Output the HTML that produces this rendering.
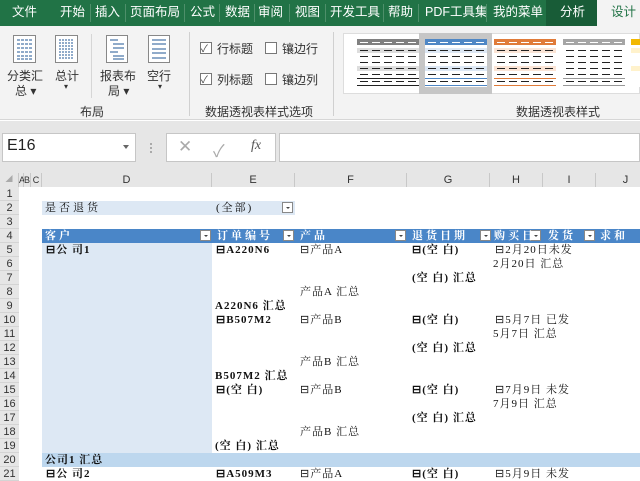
<!DOCTYPE html>
<html><head><meta charset="utf-8"><style>
*{margin:0;padding:0;box-sizing:border-box}
body{width:640px;height:480px;overflow:hidden;position:relative;background:#fff;font-family:"Liberation Sans","Microsoft YaHei","Noto Sans CJK SC",sans-serif}
.a{position:absolute}
.tab{position:absolute;top:0;height:26px;line-height:24px;color:#fff;font-size:12.5px;white-space:nowrap}
.sep{position:absolute;top:4px;width:1px;height:18px;background:#4e8f6a}
.rl{position:absolute;font-size:12px;color:#333;white-space:nowrap}
.cb{position:absolute;width:12px;height:12px;border:1px solid #777;background:#fff}
.thumb{position:absolute;top:39px;width:62px;height:48px;background:#fff}
.dl{position:absolute;left:3px;right:3px;height:1px;background:repeating-linear-gradient(90deg,#222 0 8px,transparent 8px 12px)}
.g{font-family:"Liberation Serif","Noto Serif CJK SC",serif;font-size:11px;color:#111;position:absolute;white-space:nowrap;line-height:14px;letter-spacing:1px}
.b{font-weight:bold}
.rh{position:absolute;left:0;width:19px;height:14px;font-size:11px;color:#333;text-align:center;line-height:14px;border-bottom:1px solid #d4d4d4;background:#e6e6e6}
.ch{position:absolute;top:173px;height:14px;font-size:11px;color:#333;text-align:center;line-height:14px;border-right:1px solid #c8c8c8;background:#e6e6e6}
.dd{position:absolute;width:11px;height:11px;background:#fff;border:1px solid #888}
.dd:after{content:"";position:absolute;left:3px;top:4px;border:2px solid transparent;border-top:2px solid #444}
.hw{color:#fff;font-family:"Liberation Serif","Noto Serif CJK SC",serif;font-size:11px;position:absolute;top:229px;line-height:14px;font-weight:bold;letter-spacing:3px}
</style></head><body>
<div class="a" style="left:0;top:0;width:640px;height:26px;background:#217346"></div>
<div class="a" style="left:546px;top:0;width:51px;height:26px;background:#185c37"></div>
<div class="a" style="left:597px;top:0;width:43px;height:27px;background:#f3f3f3"></div>
<div class="tab" style="left:12px">文件</div>
<div class="tab" style="left:60px">开始</div><div class="sep" style="left:90px"></div>
<div class="tab" style="left:95px">插入</div><div class="sep" style="left:125px"></div>
<div class="tab" style="left:130px">页面布局</div><div class="sep" style="left:184px"></div>
<div class="tab" style="left:190px">公式</div><div class="sep" style="left:219px"></div>
<div class="tab" style="left:225px">数据</div><div class="sep" style="left:254px"></div>
<div class="tab" style="left:258px">审阅</div><div class="sep" style="left:289px"></div>
<div class="tab" style="left:295px">视图</div><div class="sep" style="left:325px"></div>
<div class="tab" style="left:330px">开发工具</div><div class="sep" style="left:383px"></div>
<div class="tab" style="left:388px">帮助</div><div class="sep" style="left:418px"></div>
<div class="tab" style="left:425px">PDF工具集</div><div class="sep" style="left:486px"></div>
<div class="tab" style="left:493px">我的菜单</div>
<div class="tab" style="left:560px">分析</div>
<div class="tab" style="left:611px;color:#217346">设计</div>
<div class="a" style="left:0;top:26px;width:640px;height:94px;background:#f3f3f3;border-bottom:1px solid #d6d6d6"></div>
<svg class="a" style="left:12px;top:34px" width="170" height="30">
 <g fill="#fff" stroke="#888"><rect x="1.5" y="1.5" width="22" height="27"/><rect x="43.5" y="1.5" width="22" height="27"/><rect x="94.5" y="1.5" width="21" height="27"/><rect x="136.5" y="1.5" width="21" height="27"/></g>
 <g stroke="#6b8fb8" stroke-width="1.5">
  <path d="M5 6h15M5 10h15M5 14h15M5 18h15M5 22h15M5 25h15" stroke-dasharray="3 1"/>
  <path d="M47 6h15M47 9h15M47 12h15M47 15h15M47 18h15M47 21h15M47 24h15" stroke-dasharray="2 1"/>
  <path d="M98 6h8M101 10h11M101 14h11M98 18h8M101 22h11M101 25h11"/>
  <path d="M140 6h14M140 10h14M140 15h14M140 19h14M140 24h14"/>
 </g></svg>
<div class="rl" style="left:7px;top:67px">分类汇</div><div class="rl" style="left:15px;top:82px">总 ▾</div>
<div class="rl" style="left:55px;top:67px">总计</div><div class="rl" style="left:64px;top:82px;font-size:8px">▾</div>
<div class="a" style="left:91px;top:34px;width:1px;height:64px;background:#d6d6d6"></div>
<div class="rl" style="left:100px;top:67px">报表布</div><div class="rl" style="left:108px;top:82px">局 ▾</div>
<div class="rl" style="left:147px;top:67px">空行</div><div class="rl" style="left:158px;top:82px;font-size:8px">▾</div>
<div class="rl" style="left:80px;top:103px">布局</div>
<div class="a" style="left:189px;top:32px;width:1px;height:84px;background:#d0d0d0"></div>
<div class="cb" style="left:200px;top:42px"></div><div class="rl" style="left:201px;top:40px;font-size:10px;color:#444">✓</div>
<div class="rl" style="left:217px;top:40px">行标题</div>
<div class="cb" style="left:265px;top:42px"></div><div class="rl" style="left:282px;top:40px">镶边行</div>
<div class="cb" style="left:200px;top:73px"></div><div class="rl" style="left:201px;top:71px;font-size:10px;color:#444">✓</div>
<div class="rl" style="left:217px;top:71px">列标题</div>
<div class="cb" style="left:265px;top:73px"></div><div class="rl" style="left:282px;top:71px">镶边列</div>
<div class="rl" style="left:205px;top:103px">数据透视表样式选项</div>
<div class="a" style="left:333px;top:32px;width:1px;height:84px;background:#d0d0d0"></div>
<div class="a" style="left:343px;top:33px;width:297px;height:61px;background:#fff;border:1px solid #ddd"></div>
<div class="a" style="left:419px;top:33px;width:73px;height:61px;background:#c6c6c6"></div>
<div class="thumb" style="left:357px"><div class="a" style="left:0;top:0;width:62px;height:6px;background:#808080"></div><div class="a" style="left:0;top:9px;width:62px;height:5px;background:#ddd"></div><div class="a" style="left:0;top:27px;width:62px;height:5px;background:#ddd"></div>
<div class="dl" style="top:3px;background:repeating-linear-gradient(90deg,#fff 0 8px,transparent 8px 12px)"></div><div class="dl" style="top:11px"></div><div class="dl" style="top:17px"></div><div class="dl" style="top:23px"></div><div class="dl" style="top:29px"></div><div class="dl" style="top:35px"></div><div class="dl" style="top:42px"></div><div class="a" style="left:0;top:39px;width:62px;height:1px;background:#222"></div><div class="a" style="left:0;top:46px;width:62px;height:1px;background:#222"></div></div>
<div class="thumb" style="left:425px"><div class="a" style="left:0;top:0;width:62px;height:6px;background:#4f87c5"></div><div class="a" style="left:0;top:9px;width:62px;height:5px;background:#dde8f5"></div><div class="a" style="left:0;top:27px;width:62px;height:5px;background:#dde8f5"></div>
<div class="dl" style="top:3px;background:repeating-linear-gradient(90deg,#fff 0 8px,transparent 8px 12px)"></div><div class="dl" style="top:11px"></div><div class="dl" style="top:17px"></div><div class="dl" style="top:23px"></div><div class="dl" style="top:29px"></div><div class="dl" style="top:35px"></div><div class="dl" style="top:42px"></div><div class="a" style="left:0;top:39px;width:62px;height:1px;background:#4f87c5"></div><div class="a" style="left:0;top:46px;width:62px;height:1px;background:#4f87c5"></div></div>
<div class="thumb" style="left:494px"><div class="a" style="left:0;top:0;width:62px;height:6px;background:#e07b39"></div><div class="a" style="left:0;top:9px;width:62px;height:5px;background:#fbe4d5"></div><div class="a" style="left:0;top:27px;width:62px;height:5px;background:#fbe4d5"></div>
<div class="dl" style="top:3px;background:repeating-linear-gradient(90deg,#fff 0 8px,transparent 8px 12px)"></div><div class="dl" style="top:11px"></div><div class="dl" style="top:17px"></div><div class="dl" style="top:23px"></div><div class="dl" style="top:29px"></div><div class="dl" style="top:35px"></div><div class="dl" style="top:42px"></div><div class="a" style="left:0;top:39px;width:62px;height:1px;background:#e07b39"></div><div class="a" style="left:0;top:46px;width:62px;height:1px;background:#e07b39"></div></div>
<div class="thumb" style="left:563px"><div class="a" style="left:0;top:0;width:62px;height:6px;background:#a5a5a5"></div>
<div class="dl" style="top:3px;background:repeating-linear-gradient(90deg,#fff 0 8px,transparent 8px 12px)"></div><div class="dl" style="top:11px"></div><div class="dl" style="top:17px"></div><div class="dl" style="top:23px"></div><div class="dl" style="top:29px"></div><div class="dl" style="top:35px"></div><div class="dl" style="top:42px"></div><div class="a" style="left:0;top:39px;width:62px;height:1px;background:#999"></div><div class="a" style="left:0;top:46px;width:62px;height:1px;background:#999"></div></div>
<div class="thumb" style="left:631px;width:9px"><div class="a" style="left:0;top:0;width:9px;height:6px;background:#f2b800"></div><div class="a" style="left:0;top:9px;width:9px;height:5px;background:#fff2cc"></div><div class="a" style="left:0;top:27px;width:9px;height:5px;background:#fff2cc"></div></div>
<div class="rl" style="left:516px;top:103px">数据透视表样式</div>
<div class="a" style="left:0;top:121px;width:640px;height:52px;background:#e6e6e6"></div>
<div class="a" style="left:2px;top:133px;width:134px;height:29px;background:#fff;border:1px solid #c6c6c6"></div>
<div class="a" style="left:7px;top:137px;font-size:16px;color:#222">E16</div>
<div class="a" style="left:123px;top:145px;border:3.5px solid transparent;border-top:4px solid #666"></div>
<div class="a" style="left:150px;top:143px;width:2px;height:10px;border-left:2px dotted #aaa"></div>
<div class="a" style="left:166px;top:133px;width:110px;height:29px;background:#fff;border:1px solid #c6c6c6"></div>
<div class="a" style="left:178px;top:137px;font-size:17px;color:#aaa">✕</div>
<div class="a" style="left:213px;top:137px;font-size:17px;color:#aaa">✓</div>
<div class="a" style="left:251px;top:138px;font-size:14px;color:#555;font-style:italic;font-family:'Liberation Serif',serif">fx</div>
<div class="a" style="left:279px;top:133px;width:361px;height:29px;background:#fff;border:1px solid #c6c6c6"></div>
<div class="a" style="left:0;top:173px;width:640px;height:14px;background:#e6e6e6;border-bottom:1px solid #bbb"></div>
<div class="ch" style="left:0;width:19px;font-size:7px;color:#aaa">◢</div>
<div class="ch" style="left:19px;width:5px;font-size:9px">A</div>
<div class="ch" style="left:24px;width:7px;font-size:9px">B</div>
<div class="ch" style="left:31px;width:11px;font-size:9px">C</div>
<div class="ch" style="left:42px;width:170px">D</div>
<div class="ch" style="left:212px;width:83px">E</div>
<div class="ch" style="left:295px;width:112px">F</div>
<div class="ch" style="left:407px;width:83px">G</div>
<div class="ch" style="left:490px;width:53px">H</div>
<div class="ch" style="left:543px;width:53px">I</div>
<div class="ch" style="left:596px;width:60px">J</div>
<div class="a" style="left:0;top:187px;width:19px;height:293px;background:#e6e6e6;border-right:1px solid #bbb"></div>
<div class="rh" style="top:187px">1</div><div class="rh" style="top:201px">2</div><div class="rh" style="top:215px">3</div><div class="rh" style="top:229px">4</div><div class="rh" style="top:243px">5</div><div class="rh" style="top:257px">6</div><div class="rh" style="top:271px">7</div><div class="rh" style="top:285px">8</div><div class="rh" style="top:299px">9</div><div class="rh" style="top:313px">10</div><div class="rh" style="top:327px">11</div><div class="rh" style="top:341px">12</div><div class="rh" style="top:355px">13</div><div class="rh" style="top:369px">14</div><div class="rh" style="top:383px">15</div><div class="rh" style="top:397px">16</div><div class="rh" style="top:411px">17</div><div class="rh" style="top:425px">18</div><div class="rh" style="top:439px">19</div><div class="rh" style="top:453px">20</div><div class="rh" style="top:467px">21</div>
<div class="a" style="left:42px;top:201px;width:253px;height:14px;background:#dde8f4"></div>
<div class="dd" style="left:282px;top:202px"></div>
<div class="a" style="left:42px;top:229px;width:598px;height:14px;background:#4a86c8"></div>
<div class="a" style="left:42px;top:243px;width:170px;height:210px;background:#dde8f4"></div>
<div class="a" style="left:42px;top:453px;width:598px;height:14px;background:#bdd7ee"></div>
<div class="dd" style="left:200px;top:230px"></div><div class="dd" style="left:283px;top:230px"></div><div class="dd" style="left:395px;top:230px"></div><div class="dd" style="left:480px;top:230px"></div><div class="dd" style="left:530px;top:230px"></div><div class="dd" style="left:584px;top:230px"></div>
<div class="hw" style="left:45px">客户</div><div class="hw" style="left:217px">订单编号</div><div class="hw" style="left:300px">产品</div><div class="hw" style="left:412px">退货日期</div><div class="hw" style="left:494px">购买日</div><div class="hw" style="left:548px">发货</div><div class="hw" style="left:600px">求和项</div>
<div class="g" style="left:45px;top:201px;letter-spacing:3px">是否退货</div>
<div class="g" style="left:216px;top:201px;letter-spacing:2px">(全部)</div>
<div class="g b" style="left:46px;top:243px">⊟公 司1</div>
<div class="g b" style="left:216px;top:243px">⊟A220N6</div><div class="g" style="left:300px;top:243px">⊟产品A</div><div class="g b" style="left:412px;top:243px">⊟(空 白)</div><div class="g" style="left:495px;top:243px">⊟2月20日未发</div>
<div class="g" style="left:493px;top:257px">2月20日 汇总</div>
<div class="g b" style="left:412px;top:271px">(空 白) 汇总</div>
<div class="g" style="left:300px;top:285px">产品A 汇总</div>
<div class="g b" style="left:215px;top:299px">A220N6 汇总</div>
<div class="g b" style="left:216px;top:313px">⊟B507M2</div><div class="g" style="left:300px;top:313px">⊟产品B</div><div class="g b" style="left:412px;top:313px">⊟(空 白)</div><div class="g" style="left:495px;top:313px">⊟5月7日 已发</div>
<div class="g" style="left:493px;top:327px">5月7日 汇总</div>
<div class="g b" style="left:412px;top:341px">(空 白) 汇总</div>
<div class="g" style="left:300px;top:355px">产品B 汇总</div>
<div class="g b" style="left:215px;top:369px">B507M2 汇总</div>
<div class="g b" style="left:216px;top:383px">⊟(空 白)</div><div class="g" style="left:300px;top:383px">⊟产品B</div><div class="g b" style="left:412px;top:383px">⊟(空 白)</div><div class="g" style="left:495px;top:383px">⊟7月9日 未发</div>
<div class="g" style="left:493px;top:397px">7月9日 汇总</div>
<div class="g b" style="left:412px;top:411px">(空 白) 汇总</div>
<div class="g" style="left:300px;top:425px">产品B 汇总</div>
<div class="g b" style="left:215px;top:439px">(空 白) 汇总</div>
<div class="g b" style="left:45px;top:453px">公司1 汇总</div>
<div class="g b" style="left:46px;top:467px">⊟公 司2</div>
<div class="g b" style="left:216px;top:467px">⊟A509M3</div><div class="g" style="left:300px;top:467px">⊟产品A</div><div class="g b" style="left:412px;top:467px">⊟(空 白)</div><div class="g" style="left:495px;top:467px">⊟5月9日 未发</div>
</body></html>
